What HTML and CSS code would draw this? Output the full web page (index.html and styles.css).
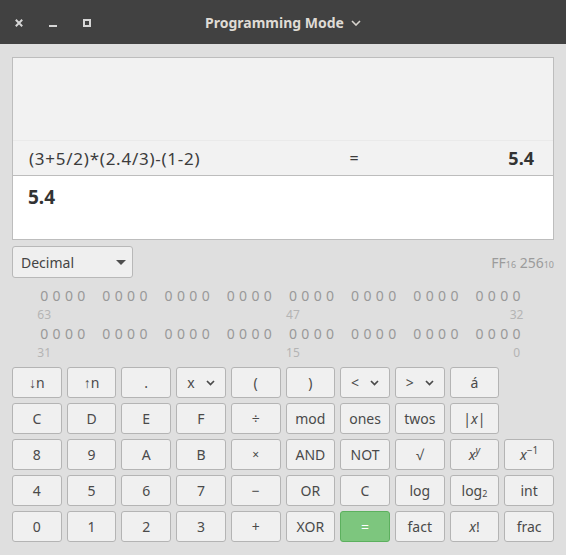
FILE: index.html
```html
<!DOCTYPE html>
<html lang="en">
<head>
<meta charset="utf-8">
<title>Programming Mode</title>
<link rel="stylesheet" href="styles.css">
</head>
<body>
<header class="titlebar">
  <div class="win-controls">
    <svg class="win-icon" width="8" height="8" viewBox="0 0 8 8"><path d="M0.8 0.8 L7.2 7.2 M7.2 0.8 L0.8 7.2" stroke="#d6d6d6" stroke-width="2" fill="none"/></svg>
    <svg class="win-icon" width="8" height="8" viewBox="0 0 8 8"><rect x="0" y="6" width="8" height="2" fill="#d6d6d6"/></svg>
    <svg class="win-icon" width="8" height="8" viewBox="0 0 8 8"><rect x="1" y="1" width="6" height="6" stroke="#d6d6d6" stroke-width="2" fill="none"/></svg>
  </div>
  <div class="title">
    <span class="title-text">Programming Mode</span>
    <svg class="title-chevron" width="10" height="6" viewBox="0 0 10 6"><path d="M1 1 L5 5 L9 1" stroke="#d8d4ce" stroke-width="1.6" fill="none"/></svg>
  </div>
  <div></div>
</header>

<main class="content">
  <section class="display">
    <div class="history-space"></div>
    <div class="history-row">
      <span class="hist-expr">(3+5/2)*(2.4/3)-(1-2)</span>
      <span class="hist-eq">=</span>
      <span class="hist-result">5.4</span>
    </div>
    <div class="entry">5.4</div>
  </section>

  <div class="toolbar">
    <div class="select">
      <span>Decimal</span>
      <svg width="10" height="5" viewBox="0 0 10 5"><path d="M0 0 L10 0 L5 5 Z" fill="#4e4e4e"/></svg>
    </div>
    <div class="base-info">FF<sub>16</sub> 256<sub>10</sub></div>
  </div>

  <div class="bits" id="bits"></div>

  <div class="keys">
    <button class="key">↓n</button>
    <button class="key">↑n</button>
    <button class="key">.</button>
    <button class="key key-menu">x <svg width="9" height="6" viewBox="0 0 9 6"><path d="M1 1 L4.5 4.5 L8 1" stroke="#4a4a4a" stroke-width="1.7" fill="none"/></svg></button>
    <button class="key">(</button>
    <button class="key">)</button>
    <button class="key key-menu">&lt; <svg width="9" height="6" viewBox="0 0 9 6"><path d="M1 1 L4.5 4.5 L8 1" stroke="#4a4a4a" stroke-width="1.7" fill="none"/></svg></button>
    <button class="key key-menu">&gt; <svg width="9" height="6" viewBox="0 0 9 6"><path d="M1 1 L4.5 4.5 L8 1" stroke="#4a4a4a" stroke-width="1.7" fill="none"/></svg></button>
    <button class="key">á</button>
    <span class="key-blank"></span>

    <button class="key">C</button>
    <button class="key">D</button>
    <button class="key">E</button>
    <button class="key">F</button>
    <button class="key">÷</button>
    <button class="key">mod</button>
    <button class="key">ones</button>
    <button class="key">twos</button>
    <button class="key">|<i>x</i>|</button>
    <span class="key-blank"></span>

    <button class="key">8</button>
    <button class="key">9</button>
    <button class="key">A</button>
    <button class="key">B</button>
    <button class="key key-small">×</button>
    <button class="key">AND</button>
    <button class="key">NOT</button>
    <button class="key">√</button>
    <button class="key"><i>x</i><sup><i>y</i></sup></button>
    <button class="key"><i>x</i><sup>−1</sup></button>

    <button class="key">4</button>
    <button class="key">5</button>
    <button class="key">6</button>
    <button class="key">7</button>
    <button class="key">−</button>
    <button class="key">OR</button>
    <button class="key">C</button>
    <button class="key">log</button>
    <button class="key">log<sub>2</sub></button>
    <button class="key">int</button>

    <button class="key">0</button>
    <button class="key">1</button>
    <button class="key">2</button>
    <button class="key">3</button>
    <button class="key">+</button>
    <button class="key">XOR</button>
    <button class="key key-equals">=</button>
    <button class="key">fact</button>
    <button class="key"><i>x</i>!</button>
    <button class="key">frac</button>
  </div>
</main>
<script src="script.js"></script>
</body>
</html>
```

FILE: script.js
```js
(function () {
  var bits = document.getElementById('bits');
  var labels1 = { 0: '63', 20: '47', 38: '32' };
  var labels2 = { 0: '31', 20: '15', 38: '0' };
  function digitRow() {
    for (var g = 0; g < 8; g++) {
      for (var d = 0; d < 4; d++) {
        var s = document.createElement('span');
        s.className = 'bit';
        s.textContent = '0';
        bits.appendChild(s);
      }
      var gap = document.createElement('span');
      bits.appendChild(gap);
    }
  }
  function labelRow(map) {
    for (var i = 0; i < 40; i++) {
      var s = document.createElement('span');
      s.className = 'bit-label';
      if (map[i] !== undefined) s.textContent = map[i];
      bits.appendChild(s);
    }
  }
  digitRow();
  labelRow(labels1);
  digitRow();
  labelRow(labels2);
})();
```

FILE: styles.css
```css
* { box-sizing: border-box; }

html, body {
  margin: 0;
  padding: 0;
}

body {
  width: 566px;
  height: 555px;
  overflow: hidden;
  background: #dfdfdf;
  font-family: "Noto Sans", "Open Sans", sans-serif;
  color: #4a4a4a;
}

.titlebar {
  height: 44px;
  background: #414141;
  display: grid;
  grid-template-columns: 1fr auto 1fr;
  align-items: center;
}

.win-controls {
  display: flex;
  align-items: center;
  gap: 26px;
  padding-left: 15px;
  padding-top: 1px;
}

.win-icon { display: block; }

.title {
  display: flex;
  align-items: center;
  gap: 7px;
}

.title-text {
  font-weight: bold;
  font-size: 14px;
  color: #dfdbd5;
}

.title-chevron { display: block; margin-top: 1px; }

.content {
  padding: 13px 12px 0 12px;
}

.display {
  border: 1px solid #bdbdbd;
  background: #f2f2f2;
}

.history-space {
  height: 83px;
  border-bottom: 1px solid #eaeaea;
}

.history-row {
  height: 35px;
  border-bottom: 1px solid #bdbdbd;
  display: grid;
  grid-template-columns: 1fr 20px 170px;
  align-items: center;
  padding: 0 19px 0 16px;
}

.hist-expr {
  font-size: 17px;
  letter-spacing: 0.75px;
  color: #3c3c3c;
}

.hist-eq {
  text-align: center;
  font-size: 16px;
  color: #3c3c3c;
}

.hist-result {
  text-align: right;
  font-weight: bold;
  font-size: 18px;
  color: #333;
}

.entry {
  height: 63px;
  background: #ffffff;
  padding: 9px 15px 0;
  font-size: 19px;
  line-height: 24px;
  font-weight: bold;
  color: #333;
}

.toolbar {
  margin-top: 6px;
  display: flex;
  align-items: center;
  justify-content: space-between;
}

.select {
  width: 121px;
  height: 32px;
  border: 1px solid #b8b8b8;
  border-radius: 3px;
  background: #efefef;
  display: flex;
  align-items: center;
  justify-content: space-between;
  padding: 0 6px 0 8px;
  font-size: 14px;
  color: #444;
}

.select svg { display: block; }

.base-info {
  font-size: 14px;
  color: #9b9b9b;
}

.base-info sub {
  font-size: 9px;
  vertical-align: baseline;
}

.bits {
  margin: 8px 0 0 26px;
  display: grid;
  grid-template-columns: repeat(8, 12.36px 12.36px 12.36px 12.36px 12.76px);
  grid-auto-rows: 19px;
  align-items: center;
}

.bit {
  display: flex;
  justify-content: center;
  font-size: 14px;
  line-height: 19px;
  color: #999999;
}

.bit-label {
  display: flex;
  justify-content: center;
  font-size: 12px;
  line-height: 19px;
  color: #b4b4b4;
  white-space: nowrap;
}

.keys {
  margin-top: 5px;
  display: grid;
  grid-template-columns: repeat(10, 1fr);
  grid-auto-rows: 31px;
  gap: 5px;
}

.key {
  margin: 0;
  padding: 0;
  border: 1px solid #b4b4b4;
  border-radius: 3px;
  background: #f0f0f0;
  font-family: "Noto Sans", "Open Sans", sans-serif;
  font-size: 14px;
  color: #4a4a4a;
  display: flex;
  align-items: center;
  justify-content: center;
  line-height: 1;
}

.key i { font-style: italic; }

.key sup {
  font-size: 10px;
  position: relative;
  top: -5px;
  vertical-align: baseline;
}

.key sub {
  font-size: 9px;
  position: relative;
  top: 3px;
  vertical-align: baseline;
}

.key-menu {
  gap: 11px;
}

.key-menu svg { display: block; }

.key-small { font-size: 12px; }

.key-equals {
  background: #7dc67e;
  border-color: #5cb05e;
  color: #ffffff;
}
```
